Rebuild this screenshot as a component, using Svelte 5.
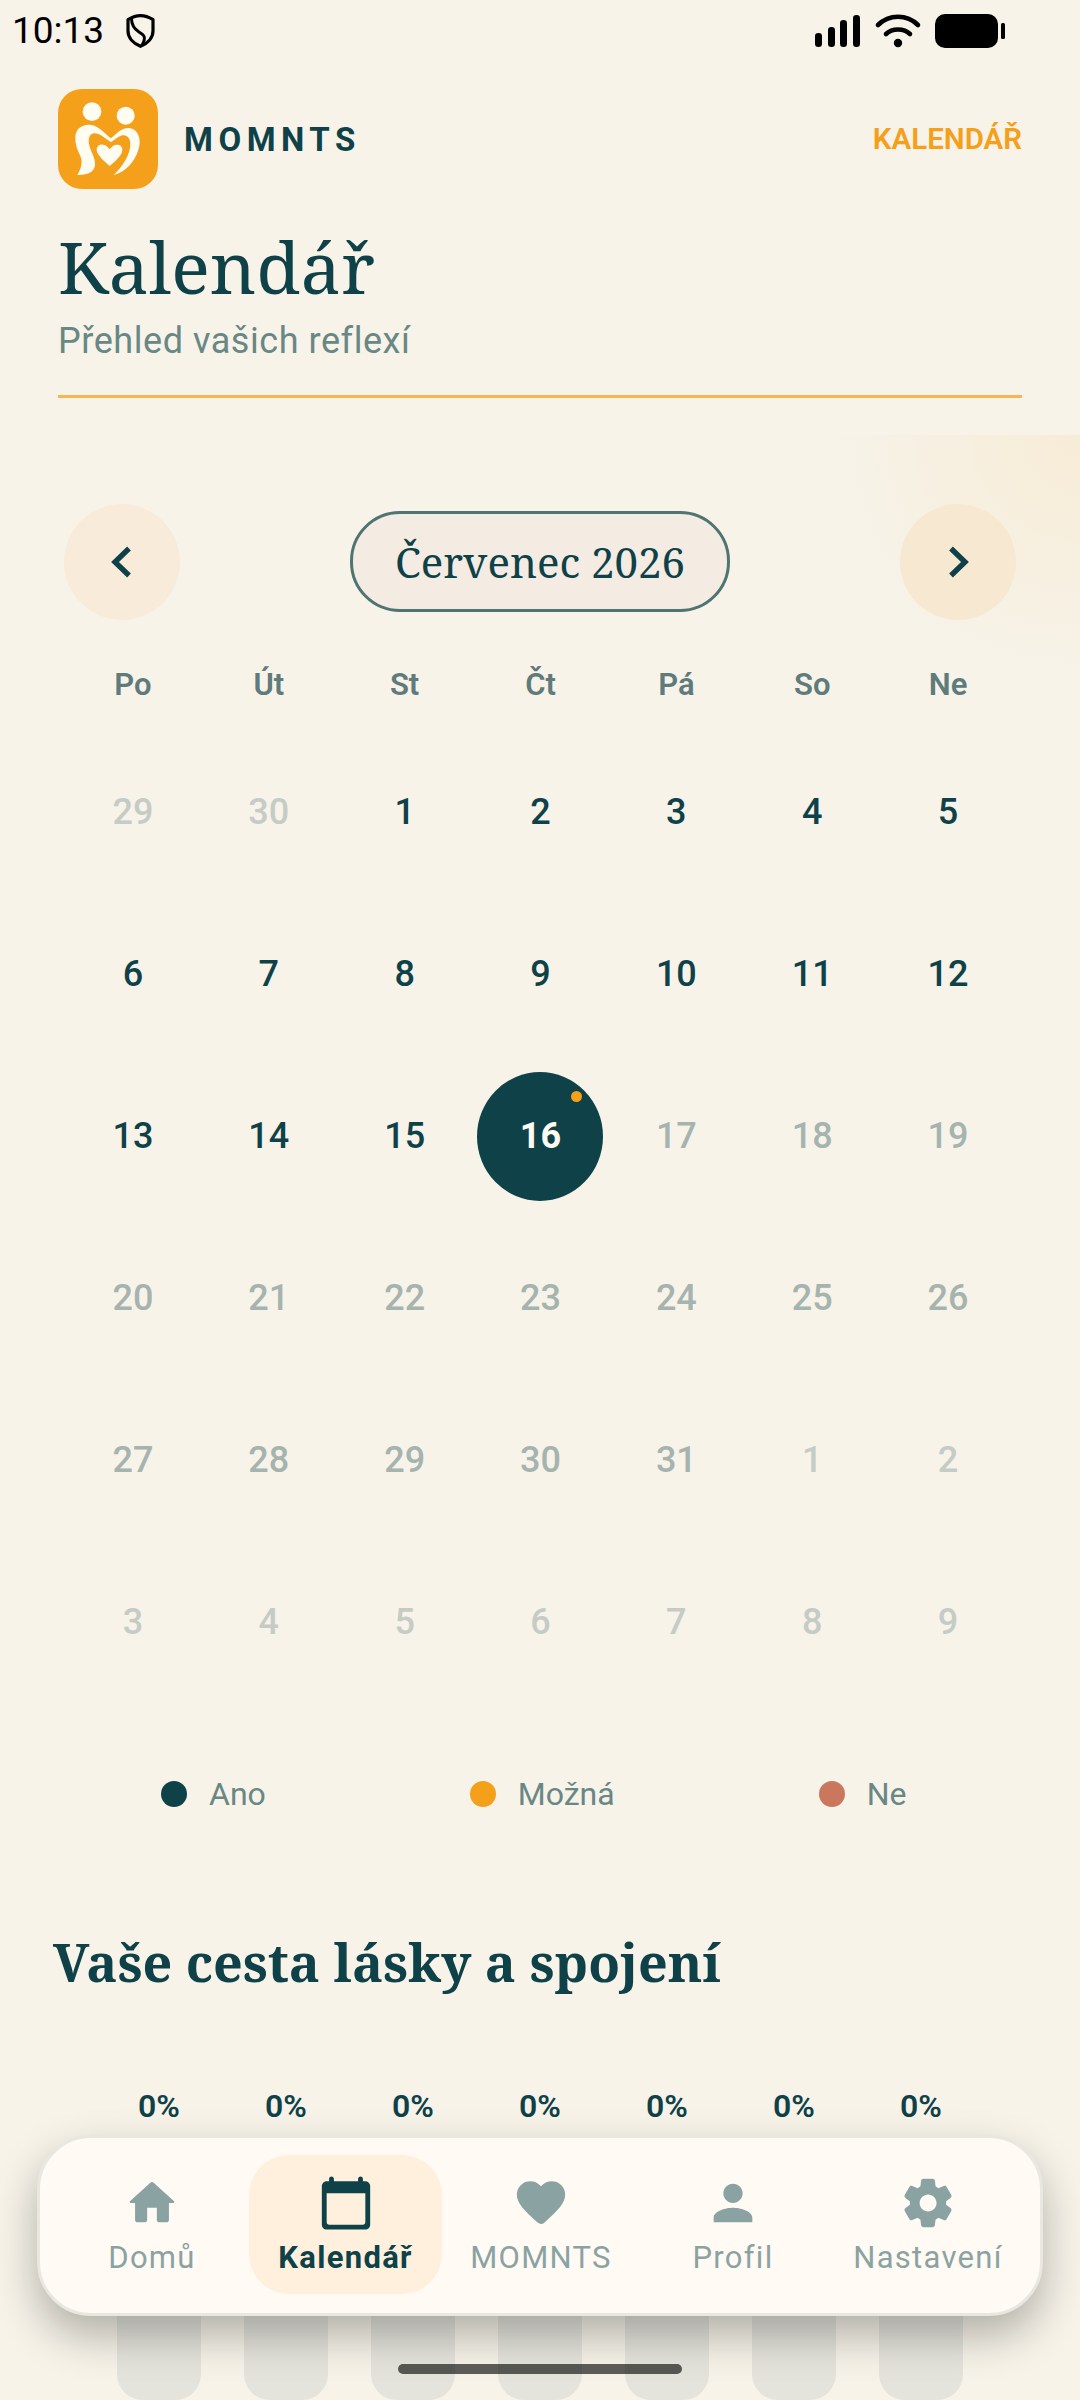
<script>
  const weekdays = ['Po', 'Út', 'St', 'Čt', 'Pá', 'So', 'Ne']
  const out = 'out', past = 'past', soon = 'soon'
  const days = [
    [29, out], [30, out],
    ...Array.from({ length: 15 }, (_, i) => [i + 1, past]),
    [16, 'today'],
    ...Array.from({ length: 15 }, (_, i) => [i + 17, soon]),
    ...Array.from({ length: 9 }, (_, i) => [i + 1, out])
  ]
  const legend = [
    { label: 'Ano', color: '#0f4148' },
    { label: 'Možná', color: '#f5a01a' },
    { label: 'Ne', color: '#c9785d' }
  ]
  const tabs = [
    { label: 'Domů', d: 'M10 19v-5h4v5c0 .55.45 1 1 1h3c.55 0 1-.45 1-1v-7h1.7c.46 0 .68-.57.33-.87L12.67 3.6c-.38-.34-.96-.34-1.34 0l-8.36 7.53c-.34.3-.13.87.33.87H5v7c0 .55.45 1 1 1h3c.55 0 1-.45 1-1z' },
    { label: 'Kalendář', active: true, d: 'M20 3h-1V2c0-.55-.45-1-1-1s-1 .45-1 1v1H7V2c0-.55-.45-1-1-1s-1 .45-1 1v1H4c-1.1 0-2 .9-2 2v16c0 1.1.9 2 2 2h16c1.1 0 2-.9 2-2V5c0-1.1-.9-2-2-2zm-1 18H5c-.55 0-1-.45-1-1V8h16v12c0 .55-.45 1-1 1z' },
    { label: 'MOMNTS', d: 'M13.35 20.13c-.76.69-1.93.69-2.69-.01l-.11-.1C5.3 15.27 1.87 12.16 2 8.28c.06-1.7.93-3.33 2.34-4.29 2.64-1.8 5.9-.96 7.66 1.1 1.76-2.06 5.02-2.91 7.66-1.1 1.41.96 2.28 2.59 2.34 4.29.14 3.88-3.3 6.99-8.55 11.76l-.1.09z' },
    { label: 'Profil', d: 'M12 12c2.21 0 4-1.79 4-4s-1.79-4-4-4-4 1.79-4 4 1.79 4 4 4zm0 2c-2.67 0-8 1.34-8 4v2h16v-2c0-2.66-5.33-4-8-4z' },
    { label: 'Nastavení', d: 'M19.5 12c0-.23-.01-.45-.03-.68l1.86-1.41c.4-.3.51-.86.26-1.3l-1.87-3.23c-.25-.44-.79-.62-1.25-.42l-2.15.91c-.37-.26-.76-.49-1.17-.68l-.29-2.31c-.06-.5-.49-.88-.99-.88h-3.73c-.51 0-.94.38-1 .88l-.29 2.31c-.41.19-.8.42-1.17.68l-2.15-.91c-.46-.2-1-.02-1.25.42L2.41 8.62c-.25.44-.14.99.26 1.3l1.86 1.41c-.02.22-.03.44-.03.67s.01.45.03.68l-1.86 1.41c-.4.3-.51.86-.26 1.3l1.87 3.23c.25.44.79.62 1.25.42l2.15-.91c.37.26.76.49 1.17.68l.29 2.31c.06.5.49.88.99.88h3.73c.5 0 .93-.38.99-.88l.29-2.31c.41-.19.8-.42 1.17-.68l2.15.91c.46.2 1 .02 1.25-.42l1.87-3.23c.25-.44.14-.99-.26-1.3l-1.86-1.41c.03-.23.04-.45.04-.68zm-7.46 3.5c-1.93 0-3.5-1.57-3.5-3.5s1.57-3.5 3.5-3.5 3.5 1.57 3.5 3.5-1.57 3.5-3.5 3.5z' }
  ]
</script>

<div class="page">
  <div class="glow"></div>

  <div class="status">
    <span class="time">10:13</span>
    <svg class="shield" viewBox="0 0 29 34" width="29" height="34" aria-hidden="true">
      <path d="M14.500 1.700C10 1.700 6 3.200 2 5.700V17C2 24 7.500 29.500 14.500 32.300C21.500 29.500 27 24 27 17V5.700C23 3.200 19 1.700 14.500 1.700Z" fill="none" stroke="#000" stroke-width="3.200" stroke-linejoin="round" />
      <path d="M5.500 4.700C5.500 11 8.500 15 13 18C18 21 21 23 15.500 32" fill="none" stroke="#000" stroke-width="3" />
    </svg>
    <svg class="sys" viewBox="815 14 190 34" width="190" height="34" aria-hidden="true">
      <rect x="815" y="33" width="7" height="14" rx="3.300" />
      <rect x="828" y="27" width="7" height="20" rx="3.300" />
      <rect x="840" y="20" width="7" height="27" rx="3.300" />
      <rect x="853" y="15" width="7" height="32" rx="3.300" />
      <path d="M878 25C889 14 907 14 918 25" fill="none" stroke="#000" stroke-width="4.600" stroke-linecap="round" />
      <path d="M886 34C892 28 904 28 910 34" fill="none" stroke="#000" stroke-width="4.600" stroke-linecap="round" />
      <circle cx="898" cy="43" r="4.200" />
      <rect x="935" y="14" width="63" height="34" rx="10" />
      <rect x="1001" y="23" width="4" height="16" rx="1.500" />
    </svg>
  </div>

  <header class="head">
    <div class="brandrow">
      <div class="brand">
        <svg class="logo" viewBox="55 57 300 300" width="100" height="100" aria-hidden="true">
          <rect x="55" y="57" width="300" height="300" rx="72" fill="#f5a01a" />
          <g fill="#fffcf2">
            <circle cx="157" cy="125" r="28" />
            <circle cx="258" cy="137" r="27" />
            <path d="M113 315C125 295 130 275 122 258C112 238 106 220 107 200C108 178 125 163 150 164C175 165 195 190 214 205C232 190 245 173 268 174C288 175 301 195 300 218C298 250 275 300 222 315C248 290 272 255 272 222C272 205 262 193 248 196C235 199 225 210 214 217C200 208 180 188 162 190C150 192 145 205 148 222C152 245 168 262 166 285C164 305 145 316 113 315Z" />
            <path d="M210 288C195 275 170 255 171 238C172 226 182 223 190 224C200 225 206 232 210 238C214 232 220 225 230 224C240 223 248 228 248 240C248 256 225 275 210 288Z" />
          </g>
        </svg>
        <span class="wordmark">MOMNTS</span>
      </div>
      <span class="crumb">KALENDÁŘ</span>
    </div>
    <h1>Kalendář</h1>
    <p class="sub">Přehled vašich reflexí</p>
  </header>

  <section class="calendar">
    <div class="month">
      <button class="arrow prev" aria-label="Předchozí">
        <svg viewBox="0 0 24 36" width="24" height="36"><path d="M19 4.500L5 18L19 31.500" fill="none" stroke="#0f4148" stroke-width="5.400" /></svg>
      </button>
      <div class="pill">Červenec 2026</div>
      <button class="arrow next" aria-label="Další">
        <svg viewBox="0 0 24 36" width="24" height="36"><path d="M5 4.500L19 18L5 31.500" fill="none" stroke="#0f4148" stroke-width="5.400" /></svg>
      </button>
    </div>

    <div class="weekdays">
      {#each weekdays as w}
        <span>{w}</span>
      {/each}
    </div>

    <div class="days">
      {#each days as [n, kind]}
        <div class="day {kind}">
          <span>{n}</span>
          {#if kind === 'today'}<i></i>{/if}
        </div>
      {/each}
    </div>

    <div class="legend">
      {#each legend as item}
        <div class="key">
          <b style:background={item.color}></b>
          <span>{item.label}</span>
        </div>
      {/each}
    </div>
  </section>

  <section class="journey">
    <h2>Vaše cesta lásky a spojení</h2>
    <div class="bars">
      {#each weekdays as w}
        <div class="bar">
          <span>0%</span>
          <div class="track"></div>
        </div>
      {/each}
    </div>
  </section>

  <nav class="tabs">
    {#each tabs as tab}
      <div class="tab" class:active={tab.active}>
        <svg viewBox="0 0 24 24" width="58" height="58" aria-hidden="true"><path d={tab.d} /></svg>
        <span>{tab.label}</span>
      </div>
    {/each}
  </nav>

  <div class="homebar"></div>
</div>

<style>
  :global(body) {
    margin: 0;
    background: #f7f3e9;
  }

  .page {
    position: relative;
    height: 2400px;
    overflow: hidden;
    background: #f7f3e9;
    color: #0f4148;
    font-family: Roboto, sans-serif;
  }

  .glow {
    position: absolute;
    top: 435px;
    right: 0;
    width: 270px;
    height: 270px;
    background: radial-gradient(circle at 100% 0, rgba(245, 160, 26, 0.09), rgba(245, 160, 26, 0) 66%);
  }

  .status {
    position: relative;
    display: flex;
    align-items: flex-start;
    height: 62px;
    padding-left: 12px;
    color: #000;
  }

  .time {
    margin-top: 10px;
    font-size: 37px;
    line-height: 42px;
  }

  .shield {
    margin: 14px 0 0 22px;
  }

  .sys {
    margin: 14px 75px 0 auto;
  }

  .head {
    position: relative;
    margin: 27px 58px 0;
    height: 306px;
    border-bottom: 3px solid #f8b651;
  }

  .brandrow {
    display: flex;
    align-items: center;
    justify-content: space-between;
  }

  .brand {
    display: flex;
    align-items: center;
    gap: 26px;
  }

  .wordmark {
    font-size: 33px;
    font-weight: 700;
    letter-spacing: 5.500px;
  }

  .crumb {
    color: #f5a01a;
    font-size: 29.500px;
    font-weight: 600;
  }

  h1 {
    margin: 32px 0 0;
    font-family: "Noto Serif", "DejaVu Serif", serif;
    font-size: 72px;
    font-weight: 400;
    line-height: 90px;
  }

  .sub {
    margin: 8.500px 0 0;
    color: #688785;
    font-size: 36px;
    letter-spacing: 0.550px;
    line-height: 42px;
  }

  .calendar {
    position: relative;
    padding: 0 64px 0 65px;
  }

  .month {
    display: flex;
    align-items: center;
    justify-content: space-between;
    margin: 105.500px 0 0 -1px;
  }

  .arrow {
    display: flex;
    align-items: center;
    justify-content: center;
    width: 116px;
    height: 116px;
    padding: 0;
    border: 0;
    border-radius: 50%;
    background: #f9ebd9;
  }

  .arrow.next {
    background: #f7e8d2;
  }

  .pill {
    display: flex;
    align-items: center;
    justify-content: center;
    box-sizing: border-box;
    width: 380px;
    height: 101px;
    border: 3px solid #4f7471;
    border-radius: 50px;
    background: #f4ece3;
    font-family: "Noto Serif", "DejaVu Serif", serif;
    font-size: 42px;
  }

  .weekdays,
  .days {
    display: grid;
    grid-template-columns: repeat(7, 1fr);
    text-align: center;
  }

  .weekdays {
    margin-top: 46px;
    color: #5f7b7b;
    font-size: 31px;
    font-weight: 600;
    line-height: 38px;
  }

  .days {
    grid-auto-rows: 162px;
    margin-top: 27.500px;
    font-size: 36px;
    font-weight: 500;
  }

  .day {
    position: relative;
    display: flex;
    align-items: center;
    justify-content: center;
  }

  .day.out {
    color: #c5ccc6;
  }

  .day.soon {
    color: #a6b4b0;
  }

  .day.today span {
    display: flex;
    align-items: center;
    justify-content: center;
    width: 126px;
    height: 129px;
    border-radius: 50%;
    background: #0f4148;
    color: #fffaf3;
    font-weight: 700;
  }

  .day i {
    position: absolute;
    top: 36px;
    left: calc(50% + 31px);
    width: 11px;
    height: 11px;
    border-radius: 50%;
    background: #f5a01a;
  }

  .legend {
    display: flex;
    gap: 204px;
    margin: 71px 0 0 96px;
    color: #688785;
    font-size: 32px;
    line-height: 40px;
  }

  .key {
    display: flex;
    align-items: center;
    gap: 22px;
  }

  .key b {
    width: 26px;
    height: 26px;
    border-radius: 50%;
  }

  .journey {
    padding: 0 53px;
  }

  h2 {
    margin: 115px 0 0;
    font-family: "Noto Serif", "DejaVu Serif", serif;
    font-size: 52px;
    font-weight: 700;
    line-height: 66px;
  }

  .bars {
    display: grid;
    grid-template-columns: repeat(7, 127px);
    justify-content: center;
    margin-top: 93px;
  }

  .bar {
    display: flex;
    flex-direction: column;
    align-items: center;
    font-size: 32px;
    font-weight: 600;
    line-height: 36px;
  }

  .track {
    width: 84px;
    height: 265px;
    margin-top: 11px;
    border-radius: 0 0 26px 26px;
    background: #e4e4dc;
  }

  .tabs {
    position: absolute;
    top: 2135px;
    left: 37px;
    box-sizing: border-box;
    display: grid;
    grid-template-columns: 194px 193px 198px 186px 204px;
    width: 1006px;
    height: 181px;
    padding: 17px 0 0 15px;
    border: 3px solid #e8e8e0;
    border-radius: 54px;
    background: #fffaf3;
    box-shadow: 0 20px 44px rgba(0, 0, 0, 0.28);
  }

  .tab {
    display: flex;
    flex-direction: column;
    align-items: center;
    height: 139px;
    padding-top: 19px;
    box-sizing: border-box;
    border-radius: 40px;
    color: #8aa3a2;
    fill: #8aa3a2;
    font-size: 31px;
    letter-spacing: 1.300px;
    line-height: 36px;
  }

  .tab svg {
    margin-bottom: 8px;
  }

  .tab.active {
    background: #fef0dc;
    color: #0f4148;
    fill: #0f4148;
    font-weight: 700;
  }

  .homebar {
    position: absolute;
    top: 2364px;
    left: 398px;
    width: 284px;
    height: 10px;
    border-radius: 5px;
    background: rgba(0, 0, 0, 0.62);
  }
</style>
